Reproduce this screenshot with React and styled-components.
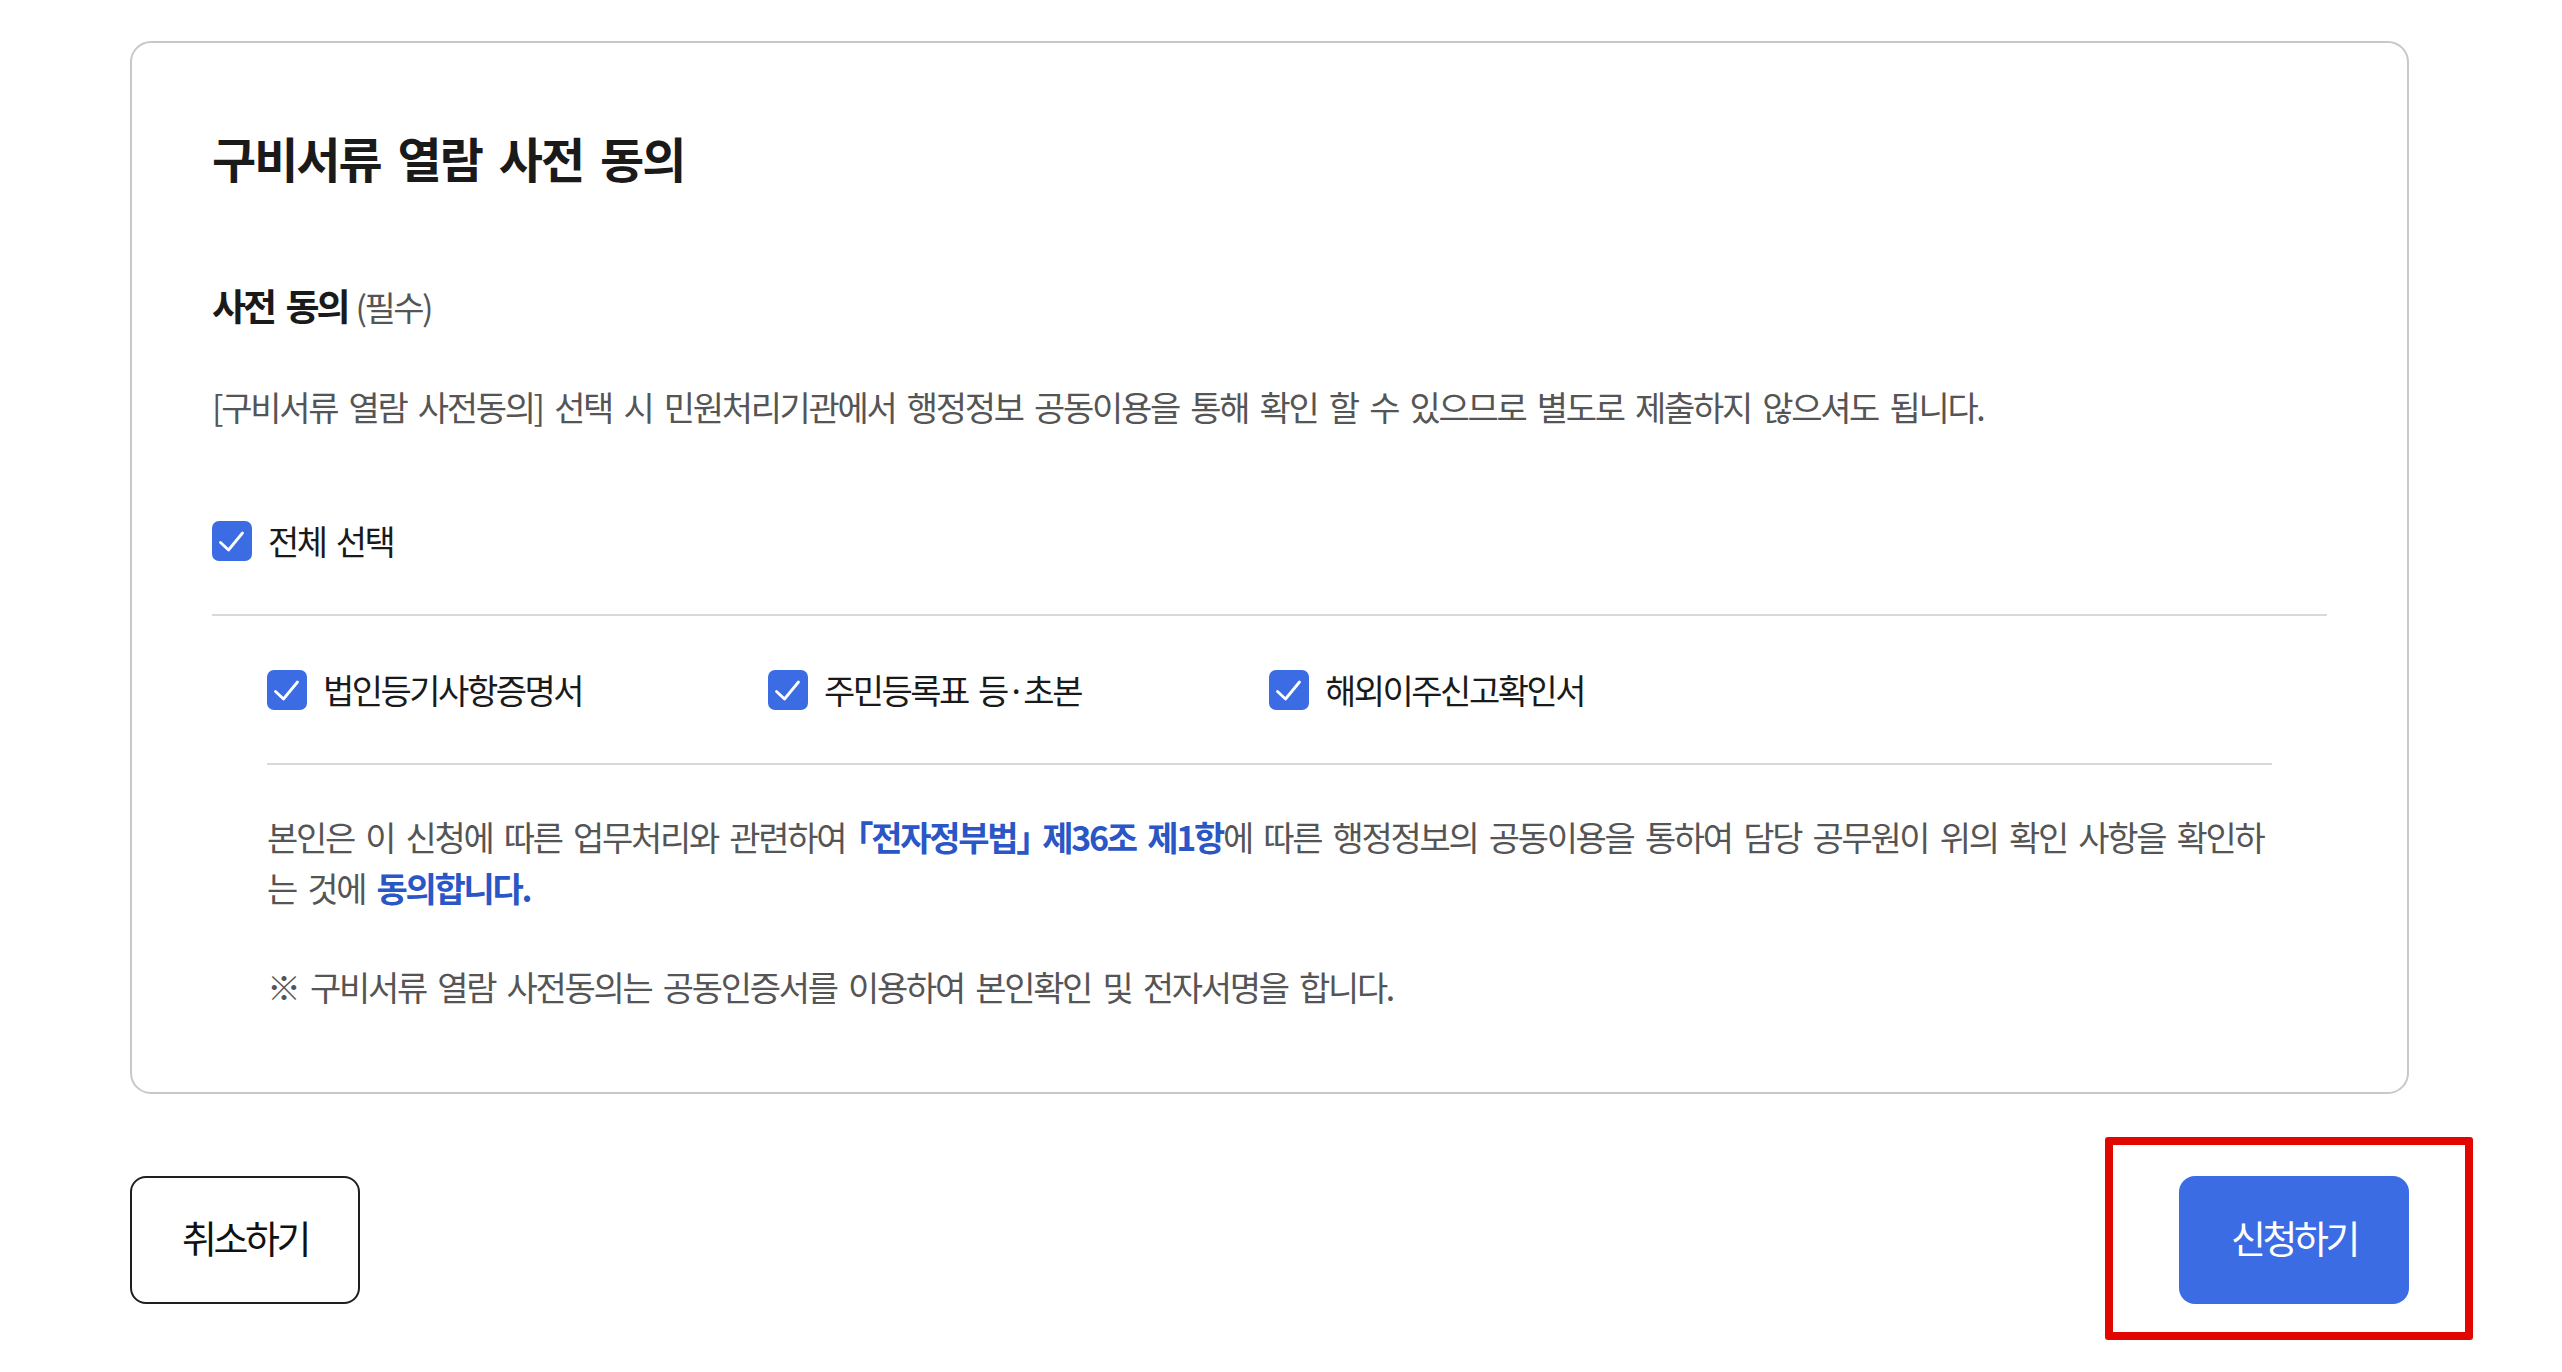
import React, { useState } from "react";
import styled, { createGlobalStyle, css } from "styled-components";

const GlobalStyle = createGlobalStyle`
  body {
    margin: 0;
    background: #ffffff;
    font-family: "Noto Sans CJK KR", "Noto Sans", sans-serif;
    color: #1a1a1a;
  }
`;

const Page = styled.main`
  width: 2279px;
  padding: 41px 0 70px 130px;
`;

const Card = styled.section`
  box-sizing: border-box;
  border: 2px solid #c8c8c8;
  border-radius: 21px;
  padding: 84px 80px 80px;
`;

const Title = styled.h2`
  margin: 0;
  font-size: 48px;
  line-height: 60px;
  font-weight: 700;
  letter-spacing: -2px;
  word-spacing: 8px;
  color: #1a1a1a;
`;

const SectionTitle = styled.h3`
  margin: 95px 0 0;
  font-size: 37px;
  line-height: 46px;
  font-weight: 700;
  letter-spacing: -3px;
  word-spacing: 6px;
  color: #1a1a1a;
`;

const Required = styled.span`
  margin-left: 8px;
  font-size: 34px;
  font-weight: 400;
  letter-spacing: -2.5px;
  color: #555555;
`;

// 본문 텍스트 공통
const bodyText = css`
  font-size: 34px;
  letter-spacing: -2.3px;
  word-spacing: 6px;
`;

const Description = styled.p`
  margin: 55px 0 0;
  line-height: 44px;
  color: #555555;
  ${bodyText}
`;

const AllRow = styled.div`
  margin-top: 92px;
  padding-bottom: 53px;
  border-bottom: 2px solid #d9d9d9;
`;

const SubArea = styled.div`
  margin: 0 55px;
`;

const SubRow = styled.div`
  display: grid;
  grid-template-columns: repeat(3, 501px);
  padding: 54px 0 53px;
  border-bottom: 2px solid #d9d9d9;
`;

const CheckLabel = styled.label`
  display: flex;
  align-items: center;
  gap: 16px;
  line-height: 40px;
  color: #1a1a1a;
  cursor: pointer;
  user-select: none;
  font-size: 34px;
  letter-spacing: -2.5px;
  word-spacing: 5px;
`;

const Box = styled.span`
  box-sizing: border-box;
  width: 40px;
  height: 40px;
  flex-shrink: 0;
  border-radius: 7px;
  display: flex;
  align-items: center;
  justify-content: center;
  background: ${(p) => (p.$checked ? "#3c6ce3" : "#ffffff")};
  border: ${(p) => (p.$checked ? "none" : "2px solid #b5b5b5")};
`;

const Consent = styled.p`
  margin: 46px 0 0;
  line-height: 51px;
  color: #555555;
  white-space: nowrap;
  font-feature-settings: "halt";
  ${bodyText}
`;

const Note = styled.p`
  margin: 48px 0 0;
  line-height: 51px;
  color: #555555;
  ${bodyText}
`;

const Em = styled.strong`
  font-weight: 700;
  color: #2a56c6;
`;

const ButtonRow = styled.div`
  display: flex;
  justify-content: space-between;
  align-items: center;
  margin-top: 82px;
`;

const Button = styled.button`
  box-sizing: border-box;
  width: 230px;
  height: 128px;
  padding: 0 0 8px;
  border-radius: 16px;
  font-family: inherit;
  font-size: 38px;
  letter-spacing: -3.5px;
  cursor: pointer;
  ${(p) =>
    p.$primary
      ? css`
          background: #3c6ce3;
          border: none;
          color: #ffffff;
        `
      : css`
          background: #ffffff;
          border: 2px solid #1f1f1f;
          color: #111111;
        `}
`;

// 스크린샷 위 빨간 강조 박스
const Highlight = styled.div`
  position: relative;

  &::after {
    content: "";
    position: absolute;
    top: -39px;
    left: -74px;
    right: -64px;
    bottom: -36px;
    border: 8px solid #e10600;
    border-radius: 3px;
    pointer-events: none;
  }
`;

const CheckMark = () => (
  <svg width="40" height="40" viewBox="0 0 40 40" fill="none">
    <path
      d="M8.5 21.5L16.5 29L30.5 12"
      stroke="#ffffff"
      strokeWidth="2.8"
      strokeLinecap="round"
      strokeLinejoin="round"
    />
  </svg>
);

const Checkbox = ({ checked, onToggle, children }) => (
  <CheckLabel onClick={onToggle}>
    <Box $checked={checked}>{checked && <CheckMark />}</Box>
    {children}
  </CheckLabel>
);

const DOCS = ["법인등기사항증명서", "주민등록표 등·초본", "해외이주신고확인서"];

const App = () => {
  const [checked, setChecked] = useState(DOCS.map(() => true));
  const all = checked.every(Boolean);

  const toggleAll = () => setChecked(DOCS.map(() => !all));
  const toggle = (i) => setChecked(checked.map((v, j) => (j === i ? !v : v)));

  return (
    <Page>
      <GlobalStyle />
      <Card>
        <Title>구비서류 열람 사전 동의</Title>
        <SectionTitle>
          사전 동의<Required>(필수)</Required>
        </SectionTitle>
        <Description>
          [구비서류 열람 사전동의] 선택 시 민원처리기관에서 행정정보 공동이용을 통해 확인 할 수
          있으므로 별도로 제출하지 않으셔도 됩니다.
        </Description>

        <AllRow>
          <Checkbox checked={all} onToggle={toggleAll}>
            전체 선택
          </Checkbox>
        </AllRow>

        <SubArea>
          <SubRow>
            {DOCS.map((doc, i) => (
              <Checkbox key={doc} checked={checked[i]} onToggle={() => toggle(i)}>
                {doc}
              </Checkbox>
            ))}
          </SubRow>
          <Consent>
            본인은 이 신청에 따른 업무처리와 관련하여 <Em>「전자정부법」 제36조 제1항</Em>에 따른
            행정정보의 공동이용을 통하여 담당 공무원이 위의 확인 사항을 확인하
            <br />는 것에 <Em>동의합니다.</Em>
          </Consent>
          <Note>※ 구비서류 열람 사전동의는 공동인증서를 이용하여 본인확인 및 전자서명을 합니다.</Note>
        </SubArea>
      </Card>

      <ButtonRow>
        <Button>취소하기</Button>
        <Highlight>
          <Button $primary>신청하기</Button>
        </Highlight>
      </ButtonRow>
    </Page>
  );
};

export default App;
